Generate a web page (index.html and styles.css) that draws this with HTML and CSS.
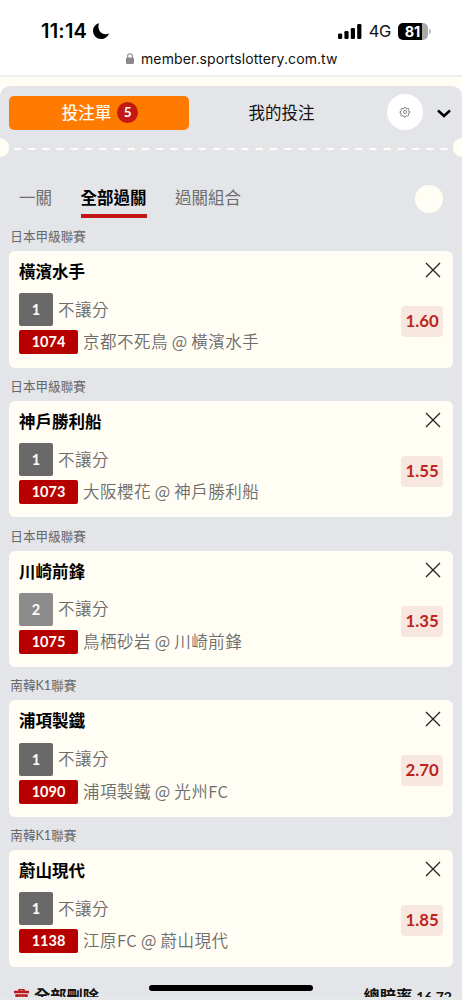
FILE: index.html
```html
<!DOCTYPE html>
<html lang="zh-Hant">
<head>
<meta charset="utf-8">
<meta name="viewport" content="width=device-width, initial-scale=1">
<title>投注單</title>
<link rel="stylesheet" href="styles.css">
</head>
<body>
<div class="screen">
  <header class="browser">
    <div class="status">
      <div class="status-left">
        <span class="time">11:14</span>
        <svg class="moon" viewBox="0 0 16 16"><path d="M6 .2C1.500 1.500 0 5 0 8a8 8 0 0 0 8 8c3.500 0 6.800-2 8-5.500C10 13 3.500 8 6 .2Z"/></svg>
      </div>
      <div class="status-right">
        <svg class="signal" viewBox="0 0 24 15"><rect x="0" y="9.5" width="4.2" height="5.5" rx="1.2"/><rect x="6.4" y="7" width="4.2" height="8" rx="1.2"/><rect x="12.8" y="4" width="4.2" height="11" rx="1.2"/><rect x="19.2" y="0" width="4.2" height="15" rx="1.2"/></svg>
        <span class="network">4G</span>
        <span class="battery">81</span><span class="battery-tip"></span>
      </div>
    </div>
    <div class="address">
      <svg class="lock" viewBox="0 0 8 11"><rect x="0" y="4.6" width="8" height="6.4" rx="1.2"/><path d="M1.7 5V3a2.3 2.3 0 0 1 4.6 0v2" fill="none" stroke="#8a8a8e" stroke-width="1.1"/></svg>
      <span>member.sportslottery.com.tw</span>
    </div>
  </header>
  <main class="panel">
    <div class="top">
      <div class="slip">投注單<span class="count">5</span></div>
      <div class="mine">我的投注</div>
      <div class="settings"><svg viewBox="0 0 24 24"><circle cx="12" cy="12" r="3.800"/><path d="M10.200 1h3.600l.8 3 2 .8L19.300 3 21.800 5.500 20 8.400l.5 1.800 2.800.7v3l-3 .9-.8 2 1.500 2.700-2.500 2.500-2.800-1.500-2 .8-.9 2.700h-3.200l-.9-2.700-2-.8L4 22l-2.500-2.500L3.200 16.800l-.7-2L0 14v-3.200l2.800-.7.7-2L2 5.500 4.500 3l2.800 1.800 2-.8Z"/></svg></div>
      <svg class="chevron" viewBox="0 0 14 9"><path d="M1 1.500 7 7l6-5.500"/></svg>
    </div>
    <div class="tear">
      <svg class="dashes" viewBox="0 0 434 2"><path d="M0 1H434"/></svg>
    </div>
    <nav class="tabs">
      <span class="tab">一關</span>
      <span class="tab active">全部過關</span>
      <span class="tab">過關組合</span>
      <span class="dot"></span>
    </nav>

    <section class="bet">
      <h2 class="league">日本甲級聯賽</h2>
      <div class="card">
        <div class="info"><h3 class="team">橫濱水手</h3>
          <div class="line"><span class="pick">1</span><span class="desc">不讓分</span></div>
          <div class="line match"><span class="code">1074</span><span class="desc">京都不死鳥 @ 橫濱水手</span></div></div>
        <div class="side"><svg class="close" viewBox="0 0 14 14"><path d="M0 0 14 14M14 0 0 14"/></svg><span class="odds">1.60</span></div>
      </div>
    </section>
    <section class="bet">
      <h2 class="league">日本甲級聯賽</h2>
      <div class="card">
        <div class="info"><h3 class="team">神戶勝利船</h3>
          <div class="line"><span class="pick">1</span><span class="desc">不讓分</span></div>
          <div class="line match"><span class="code">1073</span><span class="desc">大阪櫻花 @ 神戶勝利船</span></div></div>
        <div class="side"><svg class="close" viewBox="0 0 14 14"><path d="M0 0 14 14M14 0 0 14"/></svg><span class="odds">1.55</span></div>
      </div>
    </section>
    <section class="bet">
      <h2 class="league">日本甲級聯賽</h2>
      <div class="card">
        <div class="info"><h3 class="team">川崎前鋒</h3>
          <div class="line"><span class="pick away">2</span><span class="desc">不讓分</span></div>
          <div class="line match"><span class="code">1075</span><span class="desc">鳥栖砂岩 @ 川崎前鋒</span></div></div>
        <div class="side"><svg class="close" viewBox="0 0 14 14"><path d="M0 0 14 14M14 0 0 14"/></svg><span class="odds">1.35</span></div>
      </div>
    </section>
    <section class="bet">
      <h2 class="league">南韓K1聯賽</h2>
      <div class="card">
        <div class="info"><h3 class="team">浦項製鐵</h3>
          <div class="line"><span class="pick">1</span><span class="desc">不讓分</span></div>
          <div class="line match"><span class="code">1090</span><span class="desc">浦項製鐵 @ 光州FC</span></div></div>
        <div class="side"><svg class="close" viewBox="0 0 14 14"><path d="M0 0 14 14M14 0 0 14"/></svg><span class="odds">2.70</span></div>
      </div>
    </section>
    <section class="bet">
      <h2 class="league">南韓K1聯賽</h2>
      <div class="card">
        <div class="info"><h3 class="team">蔚山現代</h3>
          <div class="line"><span class="pick">1</span><span class="desc">不讓分</span></div>
          <div class="line match"><span class="code">1138</span><span class="desc">江原FC @ 蔚山現代</span></div></div>
        <div class="side"><svg class="close" viewBox="0 0 14 14"><path d="M0 0 14 14M14 0 0 14"/></svg><span class="odds">1.85</span></div>
      </div>
    </section>

    <footer class="summary">
      <span class="clear"><svg class="trash" viewBox="0 0 15 17"><path d="M5 2V.8h5V2" fill="none" stroke="#b9191c" stroke-width="1.500"/><path d="M0 1.800h15v2.400H0ZM1.200 5.200h12.600l-1 11.800H2.200Z"/><path d="M5 6.800v8M7.500 6.800v8M10 6.800v8" stroke="#e4e5e7" stroke-width=".5"/></svg>全部刪除</span>
      <span class="total">總賠率 <span class="sum">16.72</span></span>
    </footer>
  </main>
  <div class="home"></div>
</div>
</body>
</html>
```

FILE: styles.css
```css
* { box-sizing: border-box; }
body {
  margin: 0;
  background: #fffdf4;
  color: #111;
  font-family: Lato, "Noto Sans CJK TC", sans-serif;
}
.screen {
  position: relative;
  width: 462px;
  height: 1000px;
  overflow: hidden;
  display: flex;
  flex-direction: column;
  background: #e6e7e9;
}
svg { display: block; flex: none; }

/* Browser chrome */
.browser {
  height: 77px;
  flex: none;
  background: #fff;
  border-bottom: 2px solid #eeeef0;
  font-family: Inter, sans-serif;
}
.status {
  height: 47px;
  padding: 15px 31px 0 41px;
  display: flex;
  justify-content: space-between;
}
.status-left, .status-right { display: flex; align-items: center; height: 32px; }
.time { font-size: 20px; font-weight: 600; letter-spacing: .2px; color: #000; }
.moon { width: 16px; height: 16px; margin-left: 6px; fill: #000; }
.signal { width: 24px; height: 15px; margin-right: 7px; }
.network { font-size: 16.5px; letter-spacing: -.3px; margin-right: 7px; color: #111; }
.battery {
  width: 30px;
  height: 17px;
  padding-right: 1px;
  border-radius: 5px;
  background: linear-gradient(90deg, #000 81%, #aaa 81%);
  color: #fff;
  font-size: 14.5px;
  font-weight: 700;
  line-height: 17px;
  text-align: center;
}
.battery-tip { width: 2px; height: 5px; margin-left: 1px; border-radius: 0 2px 2px 0; background: #bbb; }
.address {
  display: flex;
  align-items: center;
  height: 22px;
  padding-left: 126px;
  gap: 7px;
  font-size: 14px;
  letter-spacing: .1px;
  white-space: nowrap;
}
.lock { width: 8px; height: 11px; fill: #8a8a8e; }

/* Bet slip */
.panel {
  height: 911px;
  flex: none;
  margin-top: 9px;
  background: #e4e5e8;
  border-radius: 10px 10px 0 0;
  box-shadow: 0 -9px 0 10px #fffdf4;
  clip-path: inset(-9px 0 0 0);
  overflow: hidden;
}
.top {
  display: flex;
  align-items: center;
  height: 53px;
  padding: 0 11px 0 9px;
}
.slip {
  width: 180px;
  height: 34px;
  padding: 0 0 2px 2px;
  border-radius: 5px;
  background: #ff7b00;
  color: #fff;
  display: flex;
  align-items: center;
  justify-content: center;
  gap: 6px;
  font-size: 16.5px;
  -webkit-text-stroke: .15px #fff;
}
.count {
  width: 21px;
  height: 21px;
  margin-top: 1px;
  border-radius: 50%;
  background: #c31815;
  font-size: 13.5px;
  font-weight: 700;
  line-height: 21px;
  text-align: center;
  -webkit-text-stroke: 0;
}
.mine { width: 185px; padding-bottom: 2px; text-align: center; font-size: 16.5px; }
.settings {
  width: 36px;
  height: 36px;
  margin-left: 13px;
  margin-bottom: 1px;
  border-radius: 50%;
  background: #fff;
  display: grid;
  place-items: center;
}
.settings svg { width: 10px; height: 10px; overflow: visible; fill: none; stroke: #555; stroke-width: 1.7; }
.chevron { width: 14px; height: 9px; margin-left: 14px; margin-top: 1px; fill: none; stroke: #000; stroke-width: 2.5; }
.tear {
  height: 19px;
  margin-top: -1px;
  margin-bottom: 1px;
  display: flex;
  align-items: center;
  justify-content: space-between;
}
.tear::before, .tear::after {
  content: "";
  width: 9px;
  height: 19px;
  background: #fffdf4;
  border-radius: 0 10px 10px 0;
}
.tear::after { border-radius: 10px 0 0 10px; }
.dashes { width: 434px; height: 2px; margin-top: 2px; stroke: #fffdf4; stroke-width: 2; stroke-dasharray: 7.200 7.020; }
.tabs {
  display: flex;
  align-items: flex-start;
  height: 66px;
  padding: 25px 19px 0;
  gap: 28.500px;
}
.tab {
  height: 35px;
  line-height: 30px;
  font-size: 16.5px;
  color: #6c6d70;
}
.active { color: #000; font-weight: 700; border-bottom: 4px solid #c11616; }
.dot { width: 28px; height: 28px; margin: 2px 0 0 auto; border-radius: 50%; background: #fffdf4; }
.bet { padding: 0 9.300px; height: 149.750px; }
.league {
  margin: 0;
  height: 27px;
  padding-left: 1px;
  line-height: 26px;
  font-size: 12.6px;
  font-weight: 400;
  color: #67686a;
}
.card {
  height: 116.500px;
  border-radius: 6px;
  background: #fffdf4;
  padding: 9px 9.500px 0 9.700px;
  display: flex;
  justify-content: space-between;
}
.team { margin: 0; height: 33.300px; line-height: 25px; font-size: 16.5px; font-weight: 700; color: #000; }
.line { display: flex; align-items: center; gap: 5px; height: 33px; }
.match { height: 24px; margin-top: 4px; }
.pick, .code {
  color: #fffdf4;
  font-size: 14.5px;
  font-weight: 700;
  text-align: center;
  border-radius: 2px;
}
.pick { width: 34px; height: 33px; line-height: 34px; background: #696969; }
.away { background: #8c8c8c; }
.code { width: 59px; height: 24px; line-height: 24px; background: #b60000; }
.desc {
  padding-bottom: 2px;
  font-family: "Noto Sans CJK TC", sans-serif;
  line-height: 20px;
  font-size: 16.5px;
  font-weight: 350;
  letter-spacing: .5px;
  word-spacing: -.5px;
  color: #6c6c6a;
  white-space: nowrap;
}
.side { display: flex; flex-direction: column; align-items: flex-end; padding-top: 3px; }
.close { width: 14px; height: 14px; margin-right: 3px; overflow: visible; fill: none; stroke: #222; stroke-width: 1.3; }
.odds {
  width: 42px;
  height: 31px;
  margin-top: 29px;
  border-radius: 4px;
  background: #f8e7df;
  color: #bd2420;
  font-size: 16.8px;
  font-weight: 700;
  line-height: 30px;
  text-align: center;
}
.summary {
  display: flex;
  justify-content: space-between;
  padding: 11px 10px 0 14px;
  font-size: 16.3px;
  font-weight: 700;
  line-height: 24px;
}
.clear { display: flex; gap: 5px; }
.trash { width: 15px; height: 17px; margin-top: 5px; fill: #b9191c; }
.sum { font-size: 14px; }
.home {
  position: absolute;
  left: 149px;
  bottom: 9px;
  width: 164px;
  height: 6px;
  border-radius: 3px;
  background: #000;
}
```
